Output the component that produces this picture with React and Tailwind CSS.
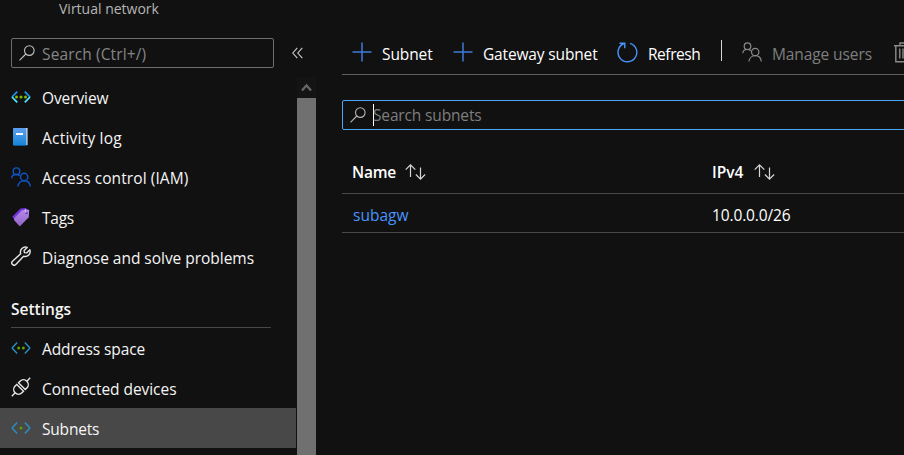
import React from "react";

function SearchIcon({ className }) {
  return (
    <svg className={className} width="16" height="16" viewBox="0 0 16 16" fill="none" stroke="currentColor" strokeWidth="1.1">
      <circle cx="10.3" cy="5.6" r="4.8" />
      <path d="M6.8 9 0.5 15.3" />
    </svg>
  );
}

function NetworkIcon({ dots, bright }) {
  return (
    <svg className={bright ? "" : "mb-px"} width="20" height="14" viewBox="0 0 20 14" fill="none" strokeWidth={bright ? 1.8 : 1.4}>
      <path d="M6.2 1.6 1 7" stroke={bright ? "#1b93eb" : "#2e8fc6"} />
      <path d="M1 7 6.2 12.4" stroke={bright ? "#50e6ff" : "#2e8fc6"} />
      <path d="M13.8 1.6 19 7" stroke={bright ? "#1b93eb" : "#2e8fc6"} />
      <path d="M19 7 13.8 12.4" stroke={bright ? "#50e6ff" : "#2e8fc6"} />
      {dots.map((x) => (
        <circle key={x} cx={x} cy="7" r="1.5" fill={bright ? "#7fba00" : "#57a300"} />
      ))}
    </svg>
  );
}

function BookIcon() {
  return (
    <svg width="20" height="20" viewBox="0 0 20 20">
      <defs>
        <linearGradient id="book" x1="0" y1="0" x2="0" y2="1">
          <stop offset="0" stopColor="#5ea0ef" />
          <stop offset="1" stopColor="#1583d8" />
        </linearGradient>
      </defs>
      <path d="M4 1h12.500v17H4z" fill="#f4f4f4" />
      <path d="M3.600 18.500h13V19h-13z" fill="#0e4f86" />
      <rect x="2" y="1" width="13.500" height="17.500" rx=".8" fill="url(#book)" />
      <rect x="5" y="6" width="7" height="2" fill="#fff" />
    </svg>
  );
}

function PeopleIcon({ strokeWidth = 1.4 }) {
  return (
    <svg width="20" height="20" viewBox="0 0 20 20" fill="none" stroke="currentColor" strokeWidth={strokeWidth}>
      <circle cx="5.500" cy="4.200" r="3.300" />
      <path d="M.8 11.200C.8 9 2.800 7.500 5.300 7.500c1.400 0 2.700.5 3.600 1.300" />
      <circle cx="13.200" cy="10" r="3.700" />
      <path d="M6.900 19.500c.4-3.400 3-5.800 6.300-5.800s5.700 2.400 6.100 5.800" />
    </svg>
  );
}

function TagIcon() {
  return (
    <svg width="20" height="20" viewBox="0 0 20 20">
      <defs>
        <linearGradient id="tag" x1="0" y1="0" x2="0" y2="1">
          <stop offset="0" stopColor="#b68bea" />
          <stop offset="1" stopColor="#9263c9" />
        </linearGradient>
      </defs>
      <path d="M1.300 9.800 9.500 1.400 15 1l1.600 2-12 11z" fill="#7435dc" />
      <path d="M3 11.500 11 3.200l6.300-.7.900 1.100-.5 6.700-8.200 8.500a1 1 0 0 1-1.400 0L3 13z" fill="url(#tag)" />
      <circle cx="15.400" cy="6" r="1.300" fill="#6440a0" />
      <path d="M15.200 5.800c-1.200-1.200-1.100-2.700-.8-3.800" stroke="#dac8f1" fill="none" />
    </svg>
  );
}

function WrenchIcon() {
  return (
    <svg className="mb-0.5" width="20" height="20" viewBox="0 0 20 20" fill="none" stroke="#e6e6e6" strokeWidth="1.400" strokeLinejoin="round">
      <path d="M16.200 1.400a5 5 0 0 0-6.500 6.300L1.500 15.300a2.300 2.300 0 0 0 3.300 3.300l7.800-8.300a5 5 0 0 0 6.200-6.500l-3.200 3.100-2.200-.3-.3-2.100z" />
    </svg>
  );
}

function PlugIcon() {
  return (
    <svg className="mb-0.5" width="20" height="20" viewBox="0 0 20 20" fill="none" stroke="#e6e6e6" strokeWidth="1.400">
      <g transform="rotate(-45 10 10)">
        <path d="M-3 10h4.700M18.300 10H23" />
        <path d="M8.800 5.200v9.600H6.500a4.800 4.800 0 0 1 0-9.600zM11.200 5.200v9.600h2.300a4.800 4.800 0 0 0 0-9.600z" />
      </g>
    </svg>
  );
}

function PlusIcon() {
  return (
    <svg width="20" height="20" viewBox="0 0 20 20" fill="none" stroke="#3d7bd9" strokeWidth="1.500">
      <path d="M10 .5v19M.5 10h19" />
    </svg>
  );
}

function RefreshIcon() {
  return (
    <svg width="21" height="21" viewBox="0 0 21 21" fill="none" stroke="#4894fe" strokeWidth="1.400">
      <path d="M13 1.300a9.400 9.400 0 1 1-5.800.2M2.500 1.300h5.300v4.900" />
    </svg>
  );
}

function TrashIcon() {
  return (
    <svg width="20" height="21" viewBox="0 0 20 21" fill="none" stroke="#8a8a8a" strokeWidth="1.400">
      <path d="M0 3.700h18M6 3.500V1h6.500v2.500M1.800 3.700v16h14.500v-16M5.800 6.500v10M9 6.500v10M12.200 6.500v10" />
    </svg>
  );
}

function SortIcon() {
  return (
    <svg width="21" height="16" viewBox="0 0 21 16" fill="none" stroke="#d6d6d6" strokeWidth="1.200">
      <path d="M5.500 1v12M.7 5.700 5.500.9l4.800 4.800M15.500 3.500v11.600M10.900 10.500l4.600 4.600 4.600-4.600" />
    </svg>
  );
}

function NavItem({ icon, label, selected, tracking }) {
  return (
    <div className={`flex h-10 w-[296px] shrink-0 items-center pl-[11px] ${selected ? "bg-[#484848]" : ""}`}>
      <span className="flex w-[31px] items-center">{icon}</span>
      <span className={`pt-0.5 ${tracking}`}>{label}</span>
    </div>
  );
}

function Sidebar() {
  return (
    <aside className="flex w-[316px] shrink-0 flex-col">
      <div className="h-[38px] pl-[59px] text-[14px] leading-[18px] text-[#b5b5b5]">
        <span>Virtual network</span>
      </div>
      <div className="flex h-[30px] items-center pl-[11px]">
        <div className="flex h-[30px] w-[263px] items-center rounded-[2px] border border-[#6e6e6e] pl-[7px] text-[#858585]">
          <SearchIcon className="text-[#c0c0c0]" />
          <span className="pt-px pl-[7px] tracking-[0.13px]">Search (Ctrl+/)</span>
        </div>
        <svg className="ml-[18px]" width="11" height="12" viewBox="0 0 11 12" fill="none" stroke="#cccccc" strokeWidth="1.100">
          <path d="M5.300.8.800 6l4.500 5.200M10.300.8 5.800 6l4.500 5.200" />
        </svg>
      </div>
      <div className="mt-[9px] flex min-h-0 flex-1">
        <nav className="flex w-[297px] flex-col text-[#f5f5f5]">
          <NavItem icon={<NetworkIcon bright dots={[5.500, 10, 14.500]} />} label="Overview" tracking="tracking-[-0.1px]" />
          <NavItem icon={<BookIcon />} label="Activity log" tracking="tracking-[0.22px]" />
          <NavItem icon={<span className="text-[#0f55c4]"><PeopleIcon /></span>} label="Access control (IAM)" tracking="tracking-[0.08px]" />
          <NavItem icon={<TagIcon />} label="Tags" tracking="tracking-[-0.25px]" />
          <NavItem icon={<WrenchIcon />} label="Diagnose and solve problems" tracking="tracking-[-0.03px]" />
          <div className="ml-[11px] flex h-[51px] w-[260px] shrink-0 items-end border-b border-[#484848] pb-2 font-semibold">
            <span>Settings</span>
          </div>
          <NavItem icon={<NetworkIcon dots={[7.700, 12.300]} />} label="Address space" tracking="tracking-[-0.08px]" />
          <NavItem icon={<PlugIcon />} label="Connected devices" tracking="tracking-[-0.05px]" />
          <NavItem icon={<NetworkIcon dots={[10]} />} label="Subnets" selected tracking="tracking-[-0.2px]" />
        </nav>
        <div className="flex w-[19px] flex-col bg-[#141414]">
          <div className="flex h-[21px] items-center justify-center">
            <svg width="11" height="9" viewBox="0 0 11 9" fill="none" stroke="#686868" strokeWidth="2.200">
              <path d="m1 7.500 4.500-5 4.500 5" />
            </svg>
          </div>
          <div className="flex-1 bg-[#707070]" />
        </div>
      </div>
    </aside>
  );
}

function Toolbar() {
  return (
    <div className="flex h-[75px] w-[640px] shrink-0 items-center border-b border-[#606060] pt-[30px] pl-2.5 whitespace-nowrap text-white">
      <PlusIcon />
      <span className="ml-2.5 w-[71px] pt-[3px] tracking-[-0.1px]">Subnet</span>
      <PlusIcon />
      <span className="ml-2.5 w-[134px] pt-[3px] tracking-[-0.15px]">Gateway subnet</span>
      <RefreshIcon />
      <span className="ml-[10px] w-[73px] pt-[3px] tracking-[-0.45px]">Refresh</span>
      <span className="mb-[3px] h-[21px] w-px bg-[#d6d6d6]" />
      <span className="ml-5 text-[#8a8a8a]"><PeopleIcon strokeWidth={1.2} /></span>
      <span className="ml-2.5 w-[122px] pt-[3px] tracking-[-0.1px] text-[#7e7e7e]">Manage users</span>
      <span className="shrink-0"><TrashIcon /></span>
    </div>
  );
}

function SubnetTable() {
  return (
    <div className="mt-5 text-white">
      <div className="flex h-11 items-center border-b border-[#484848] pl-2.5 font-semibold">
        <div className="flex w-[360px] items-center gap-[9px]"><span className="tracking-[-0.25px]">Name</span><SortIcon /></div>
        <div className="flex items-center gap-[11px]"><span>IPv4</span><SortIcon /></div>
      </div>
      <div className="flex h-[39px] items-center border-b border-[#484848] pl-2.5">
        <span className="w-[360px] pt-1 pl-px text-[#4894fe]">subagw</span>
        <span className="pt-[3px] tracking-[-0.13px]">10.0.0.0/26</span>
      </div>
    </div>
  );
}

export default function App() {
  return (
    <div className="flex h-[455px] w-[904px] overflow-hidden bg-[#111111] font-['Open_Sans','Noto_Sans',sans-serif] text-[15.5px] leading-5">
      <Sidebar />
      <main className="ml-[26px] flex w-[562px] flex-col overflow-hidden">
        <Toolbar />
        <div className="mt-[25px] flex h-[30px] w-[600px] shrink-0 items-center rounded-[2px] border border-[#4ba7f5] pl-[7px] text-[#7e7e7e]">
          <SearchIcon className="text-[#b5b5b5]" />
          <span className="ml-[7px] h-[22px] w-px bg-white" />
          <span className="-ml-px tracking-[-0.15px]">Search subnets</span>
        </div>
        <SubnetTable />
      </main>
    </div>
  );
}
